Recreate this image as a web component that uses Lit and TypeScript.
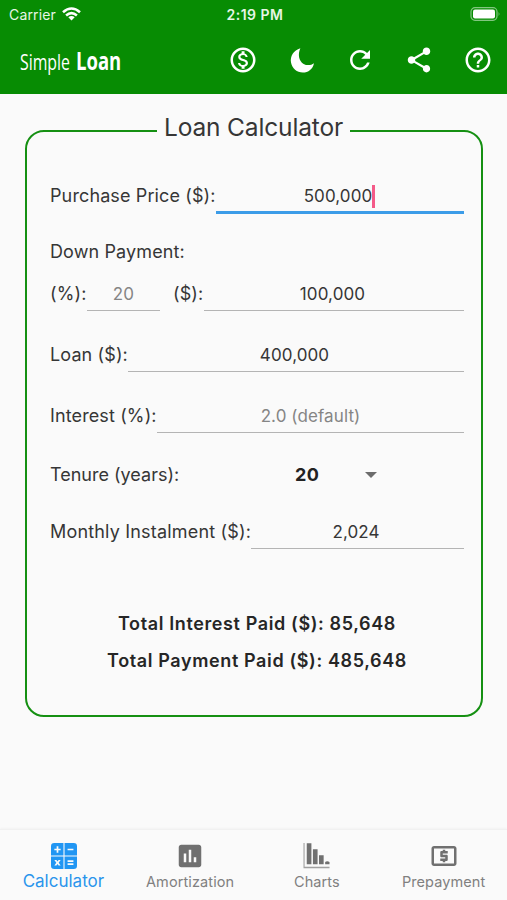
import { LitElement, html, css, svg } from "lit";
import { customElement, property } from "lit/decorators.js";

const icons = {
  dollar: svg`<path d="M12 2C6.48 2 2 6.48 2 12s4.48 10 10 10 10-4.48 10-10S17.52 2 12 2zm0 18c-4.41 0-8-3.59-8-8s3.59-8 8-8 8 3.59 8 8-3.59 8-8 8zm.31-8.86c-1.77-.45-2.34-.94-2.34-1.67 0-.84.79-1.43 2.1-1.43 1.38 0 1.9.66 1.94 1.64h1.71c-.05-1.34-.87-2.57-2.49-2.97V5H10.9v1.69c-1.51.32-2.72 1.3-2.72 2.81 0 1.79 1.49 2.69 3.66 3.21 1.95.46 2.34 1.15 2.34 1.87 0 .53-.39 1.39-2.1 1.39-1.6 0-2.23-.72-2.32-1.64H8.04c.1 1.7 1.36 2.66 2.86 2.97V19h2.34v-1.67c1.52-.29 2.72-1.16 2.73-2.77-.01-2.2-1.9-2.96-3.66-3.42z"/>`,
  moon: svg`<path d="M10.700 2.500C5.300 4.100 2.300 9 3.200 14 4 18.700 8 22 12.600 22c4.500 0 8.100-2.900 9-7.500-2.300 1.900-5.700 2.100-8.300.6C9.400 12.700 8.500 7.100 10.700 2.500z"/>`,
  refresh: svg`<path d="M17.65 6.35C16.2 4.9 14.210 4 12 4c-4.420 0-7.990 3.580-7.990 8s3.570 8 7.990 8c3.730 0 6.840-2.550 7.730-6h-2.080c-.82 2.330-3.040 4-5.650 4-3.310 0-6-2.690-6-6s2.690-6 6-6c1.660 0 3.140.69 4.220 1.780L13 11h7V4l-2.350 2.350z"/>`,
  share: svg`<path d="M18 16.080c-.76 0-1.440.3-1.960.77L8.910 12.700c.05-.23.09-.46.09-.7s-.04-.47-.09-.7l7.050-4.110c.54.5 1.250.81 2.040.81 1.660 0 3-1.340 3-3s-1.340-3-3-3-3 1.340-3 3c0 .24.04.47.09.7L8.040 9.810C7.500 9.310 6.790 9 6 9c-1.660 0-3 1.340-3 3s1.340 3 3 3c.79 0 1.500-.31 2.040-.81l7.120 4.160c-.05.21-.08.43-.08.65 0 1.610 1.310 2.920 2.920 2.920s2.920-1.310 2.920-2.920-1.310-2.920-2.920-2.920z"/>`,
  help: svg`<path d="M11 18h2v-2h-2v2zm1-16C6.480 2 2 6.480 2 12s4.480 10 10 10 10-4.480 10-10S17.520 2 12 2zm0 18c-4.410 0-8-3.590-8-8s3.590-8 8-8 8 3.590 8 8-3.590 8-8 8zm0-14c-2.210 0-4 1.790-4 4h2c0-1.100.9-2 2-2s2 .9 2 2c0 2-3 1.750-3 5h2c0-2.250 3-2.500 3-5 0-2.210-1.790-4-4-4z"/>`,
  calculator: svg`<path fill-rule="evenodd" d="M3 0H11.500V11.500H0V3Q0 0 3 0zM12.500 0H21Q24 0 24 3V11.500H12.500zM0 12.500H11.500V24H3Q0 24 0 21zM12.500 12.500H24V21Q24 24 21 24H12.500zM5.200 3.100v2.100H3.100v1.600h2.100v2.100h1.600V6.800h2.100V5.200H6.800V3.100zM15.300 5.200v1.600h5.400V5.200zM15.300 16v1.600h5.400v-1.600zM15.300 18.700v1.600h5.400v-1.600zM3.100 15.800l1.800 2.400-1.800 2.500h1.900l1-1.400 1 1.400h1.900L7.100 18.200 8.900 15.800H7l-1 1.300-1-1.300z"/>`,
  bars: svg`<path d="M19 3H5c-1.100 0-2 .9-2 2v14c0 1.100.9 2 2 2h14c1.100 0 2-.9 2-2V5c0-1.100-.9-2-2-2zM9 17H7v-7h2v7zm4 0h-2V7h2v10zm4 0h-2v-4h2v4z"/>`,
  chart: svg`<path d="M0 0h1v22h23v1.200H0z" opacity=".65"/><path d="M3 .3h4.300v19.400H3zM8.700 5.700H13v14H8.700zM14.300 11.300h4.300v8.400h-4.300zM20 17.500q1.800-1.500 4 0v2.200h-4z"/>`,
  bill: svg`<path d="M20 4H4c-1.110 0-2 .89-2 2v12c0 1.110.89 2 2 2h16c1.110 0 2-.89 2-2V6c0-1.110-.89-2-2-2zm0 14H4V6h16v12z"/><path d="M11 17h2v-1h1c.55 0 1-.45 1-1v-3c0-.55-.45-1-1-1h-3v-1h4V8h-2V7h-2v1h-1c-.55 0-1 .45-1 1v3c0 .55.45 1 1 1h3v1H9v2h2v1z"/>`,
};

type IconName = keyof typeof icons;

@customElement("app-icon")
class AppIcon extends LitElement {
  @property() name: IconName = "dollar";
  static styles = css`
    :host { display: block; width: 30px; height: 30px; }
    .glyph { display: block; width: 100%; height: 100%; fill: currentColor; }
  `;
  render() {
    return html`<svg class="glyph" viewBox="0 0 24 24">${icons[this.name]}</svg>`;
  }
}

@customElement("app-root")
class AppRoot extends LitElement {
  static styles = css`
    :host { display: flex; flex-direction: column; height: 900px; background: #fafafa; color: #363636; font-family: Inter, "Liberation Sans", sans-serif; overflow: hidden; }
    .top { height: 94px; background: #078c03; color: #fff; flex: none; }
    .status { display: grid; grid-template-columns: 1fr auto 1fr; align-items: center; height: 28px; padding: 0 6px 0 9px; font-size: 14px; color: #e7f6e6; }
    .carrier { display: flex; align-items: center; gap: 6px; letter-spacing: 0.15px; }
    .wifi { width: 19px; height: 14px; fill: none; stroke: #fff; stroke-width: 2.6; }
    .wifi-dot { fill: #fff; stroke: none; }
    .time { font-weight: 600; font-size: 14px; letter-spacing: 0.5px; }
    .battery { justify-self: end; width: 31px; height: 14px; }
    .bar { display: flex; align-items: center; height: 64px; padding: 0 14.500px 0 20px; justify-content: space-between; }
    .brand { font-family: "Open Sans", sans-serif; display: flex; align-items: baseline; white-space: nowrap; width: 101px; }
    .brand-light { width: 55.500px; font-size: 21px; transform: scaleX(0.755); transform-origin: 0 50%; }
    .brand-strong { font-size: 25px; font-weight: 700; line-height: 32px; transform: scaleX(0.74); transform-origin: 0 50%; }
    .actions { display: flex; gap: 28.600px; }
    .card { margin: 36px 24px 0 25px; height: 587px; box-sizing: border-box; border: 2px solid #159012; border-radius: 19px; padding: 0 17px 0 23px; position: relative; flex: none; display: flex; flex-direction: column; }
    .title { position: absolute; top: -23px; left: 130px; width: 193px; height: 36px; line-height: 36px; background: #fafafa; text-align: center; font-size: 24.500px; letter-spacing: -0.15px; white-space: nowrap; }
    .row { display: flex; align-items: stretch; height: 36px; line-height: 36px; font-size: 18px; letter-spacing: 0.12px; white-space: nowrap; }
    .label { flex: none; }
    .field { flex: 1; text-align: center; font-size: 17px; letter-spacing: 0.1px; border-bottom: 1.500px solid #b4b4b4; box-sizing: border-box; padding-right: 3px; }
    .muted { color: #858585; }
    .price { margin-top: 46px; }
    .price .label { width: 166px; }
    .price .field { border-bottom: 3px solid #3c9ce8; padding-right: 4px; }
    .caret { display: inline-block; width: 3px; height: 23px; background: #f45a88; vertical-align: -6px; margin: 0 -3px 0 0; }
    .down { margin-top: 20px; }
    .split { margin-top: 5px; }
    .split .label { width: 37px; }
    .split .narrow { flex: none; width: 73px; margin-right: 13px; padding: 0; }
    .split .second { width: 31px; }
    .split, .loan, .interest, .monthly { line-height: 38px; }
    .loan { margin-top: 25px; }
    .loan .label { width: 78px; }
    .interest { margin-top: 25px; }
    .interest .label { width: 107px; }
    .interest .field { padding: 0; }
    .tenure { margin-top: 24px; letter-spacing: 0; }
    .tenure .label { width: 245px; }
    .years { font-weight: 700; color: #222; width: 69px; font-size: 18px; letter-spacing: 0.3px; }
    .arrow { align-self: center; width: 0; height: 0; border: 6px solid transparent; border-top-color: #6c6c6c; border-bottom: 0; margin-left: 1px; }
    .monthly { margin-top: 20px; letter-spacing: 0.18px; }
    .monthly .label { width: 201px; }
    .totals { margin-top: 56px; text-align: center; font-weight: 600; font-size: 18px; line-height: 37px; letter-spacing: 0.620px; color: #262626; }
    .tabs { margin-top: auto; height: 71px; display: grid; grid-template-columns: repeat(4, 1fr); border-top: 1px solid #f1f1f1; box-shadow: 0 -1px 2px rgba(0, 0, 0, 0.03); box-sizing: border-box; color: #808080; }
    .tab { display: flex; flex-direction: column; align-items: center; padding-top: 11px; font-size: 14.500px; letter-spacing: 0.1px; }
    .pic { height: 30px; display: flex; align-items: center; justify-content: center; color: #707070; }
    .name { line-height: 20px; margin-top: 1px; }
    .active { color: #2a95ec; font-size: 17px; letter-spacing: 0; }
    .active .pic { color: #2196f3; padding-left: 1px; }
    .active .name { margin-top: 0; }
    .calc { width: 26px; height: 26px; }
    .chart { width: 27px; height: 26px; }
  `;

  render() {
    return html`
      <header class="top">
        <div class="status">
          <div class="carrier">Carrier
            <svg class="wifi" viewBox="0 0 19 14"><path d="M1 5.200Q9.500-2.200 18 5.200M4.100 8.500Q9.500 3.800 14.900 8.500"/><path class="wifi-dot" d="M6.300 10.300Q9.500 7.700 12.700 10.300L9.500 13.600z"/></svg>
          </div>
          <div class="time">2:19 PM</div>
          <svg class="battery" viewBox="0 0 31 14"><rect x="1" y=".7" width="26" height="12.600" rx="4" fill="none" stroke="#82c680" stroke-width="1.200"/><rect x="3" y="2.500" width="22" height="9" rx="2" fill="#fff"/><path d="M28.600 4.800q1.800 2.200 0 4.400z" fill="#82c680"/></svg>
        </div>
        <div class="bar">
          <div class="brand"><span class="brand-light">Simple</span><span class="brand-strong">Loan</span></div>
          <div class="actions">
            ${(["dollar", "moon", "refresh", "share", "help"] as IconName[]).map((n) => html`<app-icon name=${n}></app-icon>`)}
          </div>
        </div>
      </header>
      <main class="card">
        <div class="title">Loan Calculator</div>
        <div class="row price"><div class="label">Purchase Price ($):</div><div class="field">500,000<span class="caret"></span></div></div>
        <div class="row down">Down Payment:</div>
        <div class="row split"><div class="label">(%):</div><div class="field narrow muted">20</div><div class="label second">($):</div><div class="field">100,000</div></div>
        <div class="row loan"><div class="label">Loan ($):</div><div class="field">400,000</div></div>
        <div class="row interest"><div class="label">Interest (%):</div><div class="field muted">2.0 (default)</div></div>
        <div class="row tenure"><div class="label">Tenure (years):</div><div class="years">20</div><div class="arrow"></div></div>
        <div class="row monthly"><div class="label">Monthly Instalment ($):</div><div class="field">2,024</div></div>
        <div class="totals"><div>Total Interest Paid ($): 85,648</div><div>Total Payment Paid ($): 485,648</div></div>
      </main>
      <nav class="tabs">
        <div class="tab active"><div class="pic"><app-icon class="calc" name="calculator"></app-icon></div><div class="name">Calculator</div></div>
        <div class="tab"><div class="pic"><app-icon name="bars"></app-icon></div><div class="name">Amortization</div></div>
        <div class="tab"><div class="pic"><app-icon class="chart" name="chart"></app-icon></div><div class="name">Charts</div></div>
        <div class="tab"><div class="pic"><app-icon name="bill"></app-icon></div><div class="name">Prepayment</div></div>
      </nav>
    `;
  }
}
